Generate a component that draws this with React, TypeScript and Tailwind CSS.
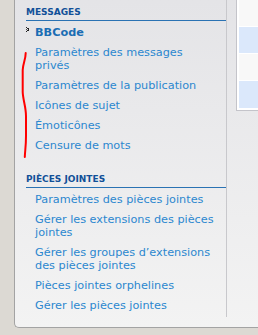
const messages = [
  'Paramètres des messages privés',
  'Paramètres de la publication',
  'Icônes de sujet',
  'Émoticônes',
  'Censure de mots',
];

const attachments = [
  'Paramètres des pièces jointes',
  'Gérer les extensions des pièces jointes',
  'Gérer les groupes d’extensions des pièces jointes',
  'Pièces jointes orphelines',
  'Gérer les pièces jointes',
];

function Bullet() {
  return (
    <svg width="4" height="5" viewBox="0 0 4 5" className="absolute left-[-9px] top-[4px]" shapeRendering="crispEdges">
      <rect x="0" y="0" width="1" height="1" fill="#222" />
      <rect x="1" y="1" width="2" height="1" fill="#222" />
      <rect x="0" y="2" width="1" height="1" fill="#555" />
      <rect x="2" y="2" width="1" height="1" fill="#222" />
      <rect x="1" y="3" width="2" height="1" fill="#222" />
      <rect x="0" y="4" width="1" height="1" fill="#222" />
    </svg>
  );
}

function Heading({ title }: { title: string }) {
  return (
    <h3 className="ml-[11px] border-b border-[#2a72b3] pt-[6px] pb-[1px] text-[9px] leading-[13px] font-bold text-[#115098]">
      {title}
    </h3>
  );
}

export default function App() {
  return (
    <div
      className="relative flex h-[335px] w-[258px] flex-col overflow-hidden bg-[#dcd9d3]"
      style={{ fontFamily: '"DejaVu Sans", Verdana, sans-serif' }}
    >
      <div className="ml-[14px] flex h-[328px] items-start rounded-bl-[5px] border-b border-l border-[#a3a3a3] bg-gradient-to-b from-[#e4e4e7] to-[#f3f3f3]">
        <nav className="w-[212px] shrink-0 border-r border-[#c8c8cc] pb-[1px]">
          <Heading title="MESSAGES" />
          <ul className="pt-[2px] pr-[8px] pl-[20px] text-[11.25px] leading-[13px]">
            <li className="relative pt-[3px] pb-[4px] font-bold text-[#1a6db4]">
              <Bullet />
              BBCode
            </li>
            {messages.map((m) => (
              <li key={m} className="pt-[3px] pb-[4px] text-[#2b87cf]">
                {m}
              </li>
            ))}
          </ul>
          <div className="mt-[11px]">
            <Heading title="PIÈCES JOINTES" />
          </div>
          <ul className="pt-[2px] pr-[8px] pl-[20px] text-[11.25px] leading-[13px]">
            {attachments.map((m) => (
              <li key={m} className="pt-[3px] pb-[4px] text-[#2b87cf]">
                {m}
              </li>
            ))}
          </ul>
        </nav>
        <div className="ml-[9px] flex flex-1 flex-col gap-[1px] border-b border-l border-[#c4c4ca] bg-white pb-[2px] pl-[2px]">
          <div className="h-[26px] bg-[#f8f8f8]" />
          <div className="h-[26px] bg-[#dbe8fb]" />
          <div className="h-[26px] bg-[#f8f8f8]" />
          <div className="h-[27px] bg-[#dbe8fb]" />
        </div>
      </div>
      <svg className="pointer-events-none absolute left-0 top-0" width="258" height="335" viewBox="0 0 258 335">
        <path
          d="M25.7 53 C25.6 60 23 63 22.7 70 L22.7 92 C23 100 26 107 26 116 L26 136 C26 146 25 151 24.8 157"
          fill="none"
          stroke="#ff0000"
          strokeWidth="2"
          strokeLinecap="round"
        />
      </svg>
    </div>
  );
}
